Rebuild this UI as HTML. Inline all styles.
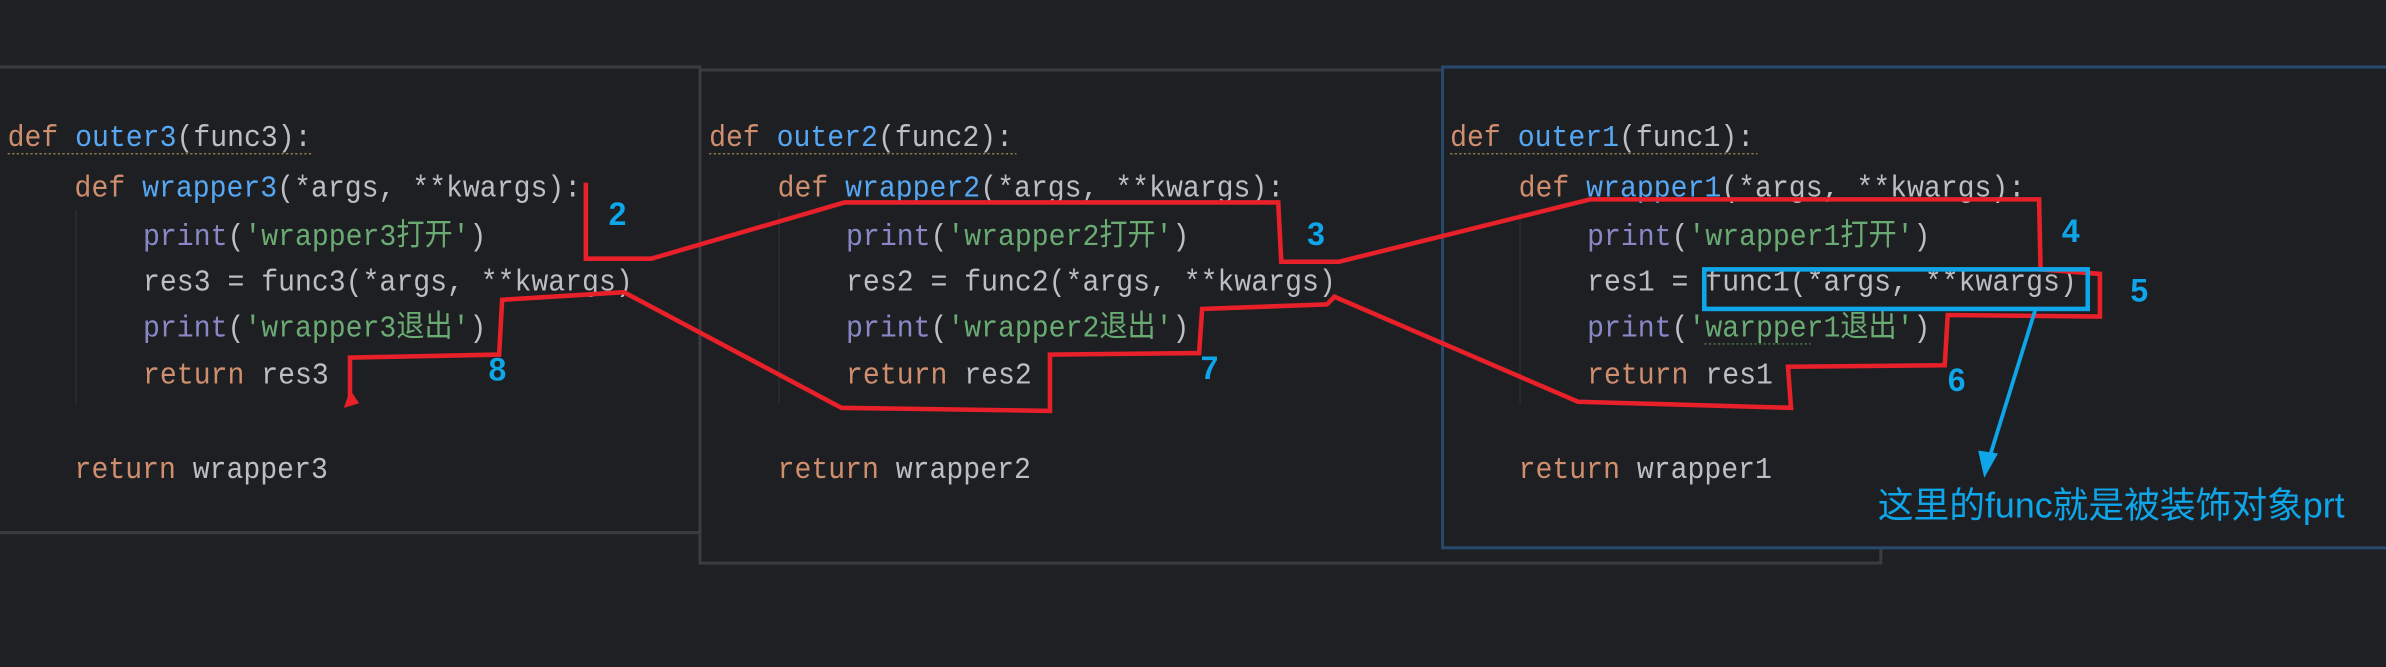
<!DOCTYPE html>
<html><head><meta charset="utf-8"><style>
html,body{margin:0;padding:0;background:#202124;overflow:hidden}
svg{display:block}
.c{font-family:"Liberation Mono","Noto Sans CJK SC",monospace;font-size:18.5px;fill:#bcbec4;white-space:pre}
.k{fill:#cf8e6d}.f{fill:#56a8f5}.p{fill:#8888c6}.s{fill:#6aab73}
.n{font-family:"Liberation Sans",sans-serif;font-weight:bold;font-size:21px;fill:#0ea5e9}
</style></head><body>
<svg width="2386" height="667" viewBox="0 0 1568 438.3" xmlns="http://www.w3.org/2000/svg">
<rect width="1568" height="438.3" fill="#202124"/>
<rect x="460" y="46" width="776" height="324" fill="#1e1f22" stroke="#3b3c3f" stroke-width="2"/>
<rect x="948" y="44" width="622" height="316" fill="#1e1f22" stroke="#27496d" stroke-width="2"/>
<rect x="-2" y="44" width="462" height="306" fill="#1e1f22" stroke="#3b3c3f" stroke-width="2"/>

<line x1="50" y1="138" x2="50" y2="265" stroke="#2c2d30"/>
<line x1="512" y1="138" x2="512" y2="265" stroke="#2c2d30"/>
<line x1="999" y1="138" x2="999" y2="265" stroke="#2c2d30"/>

<g class="c">
<text x="5" y="96" transform="translate(0,-9.6) scale(1,1.1)"><tspan class="k">def</tspan> <tspan class="f">outer3</tspan>(func3):</text>
<text x="49" y="129" transform="translate(0,-12.9) scale(1,1.1)"><tspan class="k">def</tspan> <tspan class="f">wrapper3</tspan>(*args, **kwargs):</text>
<text x="94" y="161" transform="translate(0,-16.1) scale(1,1.1)"><tspan class="p">print</tspan>(<tspan class="s">'wrapper3打开'</tspan>)</text>
<text x="94" y="191" transform="translate(0,-19.1) scale(1,1.1)">res3 = func3(*args, **kwargs)</text>
<text x="94" y="221" transform="translate(0,-22.1) scale(1,1.1)"><tspan class="p">print</tspan>(<tspan class="s">'wrapper3退出'</tspan>)</text>
<text x="94" y="252" transform="translate(0,-25.2) scale(1,1.1)"><tspan class="k">return</tspan> res3</text>
<text x="49" y="314" transform="translate(0,-31.4) scale(1,1.1)"><tspan class="k">return</tspan> wrapper3</text>
</g>
<g class="c">
<text x="466" y="96" transform="translate(0,-9.6) scale(1,1.1)"><tspan class="k">def</tspan> <tspan class="f">outer2</tspan>(func2):</text>
<text x="511" y="129" transform="translate(0,-12.9) scale(1,1.1)"><tspan class="k">def</tspan> <tspan class="f">wrapper2</tspan>(*args, **kwargs):</text>
<text x="556" y="161" transform="translate(0,-16.1) scale(1,1.1)"><tspan class="p">print</tspan>(<tspan class="s">'wrapper2打开'</tspan>)</text>
<text x="556" y="191" transform="translate(0,-19.1) scale(1,1.1)">res2 = func2(*args, **kwargs)</text>
<text x="556" y="221" transform="translate(0,-22.1) scale(1,1.1)"><tspan class="p">print</tspan>(<tspan class="s">'wrapper2退出'</tspan>)</text>
<text x="556" y="252" transform="translate(0,-25.2) scale(1,1.1)"><tspan class="k">return</tspan> res2</text>
<text x="511" y="314" transform="translate(0,-31.4) scale(1,1.1)"><tspan class="k">return</tspan> wrapper2</text>
</g>
<g class="c">
<text x="953" y="96" transform="translate(0,-9.6) scale(1,1.1)"><tspan class="k">def</tspan> <tspan class="f">outer1</tspan>(func1):</text>
<text x="998" y="129" transform="translate(0,-12.9) scale(1,1.1)"><tspan class="k">def</tspan> <tspan class="f">wrapper1</tspan>(*args, **kwargs):</text>
<text x="1043" y="161" transform="translate(0,-16.1) scale(1,1.1)"><tspan class="p">print</tspan>(<tspan class="s">'wrapper1打开'</tspan>)</text>
<text x="1043" y="191" transform="translate(0,-19.1) scale(1,1.1)">res1 = func1(*args, **kwargs)</text>
<text x="1043" y="221" transform="translate(0,-22.1) scale(1,1.1)"><tspan class="p">print</tspan>(<tspan class="s">'warpper1退出'</tspan>)</text>
<text x="1043" y="252" transform="translate(0,-25.2) scale(1,1.1)"><tspan class="k">return</tspan> res1</text>
<text x="998" y="314" transform="translate(0,-31.4) scale(1,1.1)"><tspan class="k">return</tspan> wrapper1</text>
</g>
<g stroke="#a08a50" stroke-width="0.8" stroke-dasharray="1.5 1.5" fill="none">
<line x1="5" y1="101" x2="206" y2="101"/>
<line x1="466" y1="101" x2="668" y2="101"/>
<line x1="953" y1="101" x2="1155" y2="101"/>
<line x1="1120" y1="226" x2="1190" y2="226" stroke="#5a8a50"/>
</g>

<polyline fill="none" stroke="#e8202a" stroke-width="3" stroke-linejoin="miter" points="385,120 385,170 428,170 555,133 840,133 842,172 880,172 1045,131 1340,131 1341,177 1380,180 1380,208 1280,207 1278,240 1175,241 1177,268 1037,264 877,195 872,200 790,203 788,232 690,233 690,270 553,268 410,192 330,197 328,233 230,235 230,265"/>
<polygon points="226,268 230,256 236,265" fill="#e8202a"/>

<rect x="1120" y="177" width="252" height="26" fill="none" stroke="#0ea5e9" stroke-width="3"/>
<line x1="1338" y1="202" x2="1307" y2="302" stroke="#0ea5e9" stroke-width="2.5"/>
<polygon points="1300,296 1313,298 1304,314" fill="#0ea5e9"/>
<text x="1234" y="340" font-family="Liberation Sans,Noto Sans CJK SC,sans-serif" font-size="23.5" fill="#0ea5e9">这里的func就是被装饰对象prt</text>

<text class="n" x="400" y="148">2</text>
<text class="n" x="859" y="161">3</text>
<text class="n" x="1355" y="159">4</text>
<text class="n" x="1400" y="198">5</text>
<text class="n" x="1280" y="257">6</text>
<text class="n" x="789" y="249">7</text>
<text class="n" x="321" y="250">8</text>
</svg>
</body></html>
